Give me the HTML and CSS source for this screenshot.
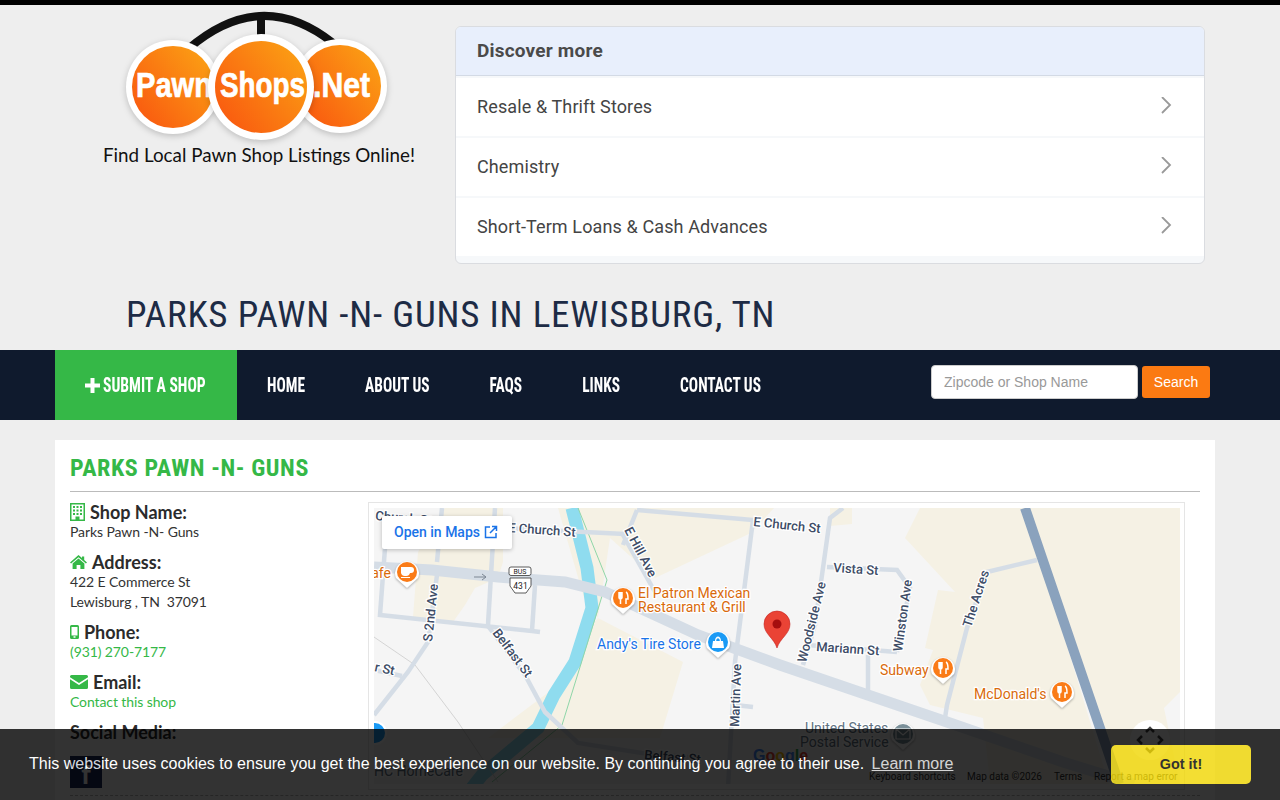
FILE: index.html
```html
<!DOCTYPE html>
<html lang="en">
<head>
    <meta charset="UTF-8">
    <meta name="viewport" content="width=device-width, initial-scale=1.0">
    <title>Parks Pawn -N- Guns in Lewisburg, TN</title>
    <link rel="stylesheet" href="styles.css">
</head>
<body>
    <header class="top">
        <a href="#" class="logo">
            <svg width="320" height="165" viewBox="0 0 320 165">
                <defs>
                    <linearGradient id="orange" x1="0" y1="1" x2="1" y2="0.2">
                        <stop offset="0" stop-color="#f9520f"/>
                        <stop offset="1" stop-color="#fb9f14"/>
                    </linearGradient>
                </defs>
                <path class="logo-arc" d="M88 44 Q161 -19 233 38"/>
                <rect x="157" y="12" width="8" height="18" fill="#111"/>
                <g class="logo-ball">
                    <circle cx="73" cy="82" r="47" fill="#fff"/>
                    <circle cx="73" cy="82" r="41" fill="url(#orange)"/>
                </g>
                <text x="36" y="92" class="logo-word" textLength="76" lengthAdjust="spacingAndGlyphs">Pawn</text>
                <g class="logo-ball">
                    <circle cx="240" cy="81" r="47" fill="#fff"/>
                    <circle cx="240" cy="81" r="41" fill="url(#orange)"/>
                </g>
                <text x="213" y="92" class="logo-word" textLength="57" lengthAdjust="spacingAndGlyphs">.Net</text>
                <g class="logo-ball">
                    <circle cx="161" cy="82" r="53" fill="#fff"/>
                    <circle cx="161" cy="82" r="46" fill="url(#orange)"/>
                </g>
                <text x="120" y="92" class="logo-word" textLength="85" lengthAdjust="spacingAndGlyphs">Shops</text>
                <text x="3" y="157" class="logo-tag" textLength="312" lengthAdjust="spacingAndGlyphs">Find Local Pawn Shop Listings Online!</text>
            </svg>
        </a>
        <div class="discover">
            <div class="discover-head">Discover more</div>
            <a href="#" class="discover-row">
                <span>Resale &amp; Thrift Stores</span>
                <svg width="12" height="18" viewBox="0 0 12 18"><path class="chev" d="M2 0 L10 8 L2 16"/></svg>
            </a>
            <a href="#" class="discover-row">
                <span>Chemistry</span>
                <svg width="12" height="18" viewBox="0 0 12 18"><path class="chev" d="M2 0 L10 8 L2 16"/></svg>
            </a>
            <a href="#" class="discover-row">
                <span>Short-Term Loans &amp; Cash Advances</span>
                <svg width="12" height="18" viewBox="0 0 12 18"><path class="chev" d="M2 0 L10 8 L2 16"/></svg>
            </a>
        </div>
    </header>

    <h1 class="page-title">PARKS PAWN -N- GUNS IN LEWISBURG, TN</h1>

    <nav class="mainnav">
        <a href="#" class="submit">
            <svg width="15" height="15" viewBox="0 0 15 15"><path fill="#fff" d="M5.5 0h4v5.5H15v4H9.5V15h-4V9.5H0v-4h5.5z"/></svg>
            <span>SUBMIT A SHOP</span>
        </a>
        <div class="navlinks">
            <a href="#">HOME</a>
            <a href="#">ABOUT US</a>
            <a href="#">FAQS</a>
            <a href="#">LINKS</a>
            <a href="#">CONTACT US</a>
        </div>
        <form class="search">
            <input type="text" placeholder="Zipcode or Shop Name">
            <button type="button">Search</button>
        </form>
    </nav>

    <main class="content">
        <h2 class="shop-title">PARKS PAWN -N- GUNS</h2>
        <div class="shop-row">
            <div class="details">
                <div class="info">
                    <h3>
                        <svg width="15" height="18" viewBox="0 0 15 18"><path class="ico" d="M0 0h15v18H0z M1.5 1.5v15h4v-3h4v3h4v-15z M3 3h2v2H3z M6.5 3h2v2h-2z M10 3h2v2h-2z M3 6.5h2v2H3z M6.5 6.5h2v2h-2z M10 6.5h2v2h-2z M3 10h2v2H3z M6.5 10h2v2h-2z M10 10h2v2h-2z" fill-rule="evenodd"/></svg>
                        Shop Name:
                    </h3>
                    <p>Parks Pawn -N- Guns</p>
                </div>
                <div class="info">
                    <h3>
                        <svg width="17" height="14" viewBox="0 0 17 14"><path class="ico" d="M8.5 0 L12 3V1.5h2.2v3.4L17 7.4 15.9 8.6 8.5 2.3 1.1 8.6 0 7.4z M8.5 3.6 14.4 8.6V14h-4V10h-3.800v4h-4V8.600z"/></svg>
                        Address:
                    </h3>
                    <p>422 E Commerce St</p>
                    <p>Lewisburg , TN&nbsp; 37091</p>
                </div>
                <div class="info">
                    <h3>
                        <svg width="9" height="14" viewBox="0 0 9 14"><path class="ico" fill-rule="evenodd" d="M1.500 0h6A1.500 1.500 0 0 1 9 1.500v11A1.500 1.500 0 0 1 7.500 14h-6A1.500 1.500 0 0 1 0 12.500v-11A1.500 1.500 0 0 1 1.500 0z M1.500 2v8.500h6V2z M3.500 11.300v1.400h2v-1.400z"/></svg>
                        Phone:
                    </h3>
                    <p><a href="#">(931) 270-7177</a></p>
                </div>
                <div class="info">
                    <h3>
                        <svg width="18" height="14" viewBox="0 0 18 14"><path class="ico" d="M1.500 0h15A1.500 1.500 0 0 1 18 1.500v.8L9 8 0 2.300v-.8A1.500 1.500 0 0 1 1.500 0z M0 4.300 9 10l9-5.700v8.200a1.500 1.500 0 0 1-1.500 1.500h-15A1.500 1.500 0 0 1 0 12.500z"/></svg>
                        Email:
                    </h3>
                    <p><a href="#">Contact this shop</a></p>
                </div>
                <div class="info">
                    <h3>Social Media:</h3>
                    <a href="#" class="fb">f</a>
                </div>
            </div>
            <div class="map-frame">
                <svg class="map" width="806" height="276" viewBox="0 0 806 276">
                    <rect width="806" height="276" fill="#f5f5f5"/>
                    <!-- land use -->
                    <g fill="#f5f1e4">
                        <path d="M71 0H129V54L124 70 101 80 91 97 79 114 39 109 44 44z"/>
                        <path d="M184 0H400L377 25 281 70 275 65 236 30 224 110 210 90z"/>
                        <path d="M224 110L309 154 286 230H114L184 177 204 130z"/>
                        <path d="M456 0H478V16L456 18z"/>
                        <path d="M546 0H651L735 276H616L609 210 556 197 546 177 559 142 551 140 564 82 581 84 531 30z"/>
                        <path d="M651 0H806V184L790 200 806 276H745z"/>
                    </g>
                    <!-- water -->
                    <path class="river" d="M198 0 L213 60 L218 100 L201 154 L180 187 L164 220 L108 267 L90 290"/>
                    <path class="stream" d="M204 0L233 72 188 217 118 274"/>
                    <path class="rail" d="M0 129L41 157 84 214 124 274"/>
                    <!-- streets -->
                    <g class="road">
                        <path d="M11 40L6 107 158 123 166 124"/>
                        <path d="M68 0L63 54"/>
                        <path d="M121 0L114 117"/>
                        <path d="M161 77L158 123"/>
                        <path d="M63 67L54 134 34 164 0 207"/>
                        <path d="M114 118L151 167 171 204 204 235 268 245 324 250"/>
                        <path d="M130 20L251 26"/>
                        <path d="M263 2L379 12"/>
                        <path d="M263 2L249 37"/>
                        <path d="M249 27L281 84"/>
                        <path d="M379 12L361 154 354 280"/>
                        <path d="M469 0L456 10 441 117 429 157"/>
                        <path d="M453 59L523 62 536 80 523 144"/>
                        <path d="M433 137L523 144"/>
                        <path d="M494 147V184"/>
                        <path d="M663 52L613 64 593 120 573 197 571 210"/>
                        <path d="M361 197L379 199"/>
                        <path d="M0 162L28 168"/>
                    </g>
                    <path class="road-main" d="M0 59L58 62 124 69 191 74 231 84 324 127 406 157 573 214 689 254 760 276"/>
                    <path class="road-high" d="M651 0L726 220 745 276"/>
                    <path class="oneway" d="M100 69H112M108 66L112 69 108 72"/>

                    <!-- street names -->
                    <text class="street" transform="translate(1 12) rotate(5)">Church St</text>
                    <text class="street" transform="translate(134 24) rotate(4)">E Church St</text>
                    <text class="street" transform="translate(379 18) rotate(6)">E Church St</text>
                    <text class="street" transform="translate(250 22) rotate(62)">E Hill Ave</text>
                    <text class="street" transform="translate(58 134) rotate(-84)">S 2nd Ave</text>
                    <text class="street" transform="translate(118 125) rotate(53)">Belfast St</text>
                    <text class="street" transform="translate(365 219) rotate(-88)">Martin Ave</text>
                    <text class="street" transform="translate(432 155) rotate(-76)">Woodside Ave</text>
                    <text class="street" transform="translate(459 64) rotate(4)">Vista St</text>
                    <text class="street" transform="translate(442 143) rotate(4)">Mariann St</text>
                    <text class="street" transform="translate(528 144) rotate(-82)">Winston Ave</text>
                    <text class="street" transform="translate(597 120) rotate(-72)">The Acres</text>
                    <text class="street" transform="translate(270 251) rotate(5)">Belfast St</text>
                    <text class="street" transform="translate(0 163) rotate(12)">r St</text>

                    <!-- route shield -->
                    <rect class="shield" x="135" y="59" width="22" height="8.500" rx="2"/>
                    <text class="shield-text" x="146" y="66" font-size="7">BUS</text>
                    <path class="shield" d="M136 70H157V78L152 85H141L136 78z"/>
                    <text class="shield-text" x="146.500" y="81" font-size="8.500">431</text>

                    <!-- places -->
                    <text class="poi poi-food" x="17" y="70" text-anchor="end">afe</text>
                    <text class="poi poi-food" x="264" y="90">El Patron Mexican</text>
                    <text class="poi poi-food" x="264" y="104">Restaurant &amp; Grill</text>
                    <text class="poi poi-shop" x="223" y="141">Andy's Tire Store</text>
                    <text class="poi poi-food" x="506" y="167">Subway</text>
                    <text class="poi poi-food" x="600" y="191">McDonald's</text>
                    <text class="poi poi-post" x="431" y="225">United States</text>
                    <text class="poi poi-post" x="426" y="239">Postal Service</text>
                    <text class="poi poi-post" x="0" y="268">HC HomeCare</text>

                    <!-- markers -->
                    <path class="pin-base" d="M22 70 A12 12 0 1 1 44 70 L33 80z"/>
                    <circle cx="33" cy="64" r="10" fill="#fa7b17"/>
                    <path fill="#fff" d="M27 59h10a3 3 0 0 1 0 6h-1a4 4 0 0 1-4 3h-1a4 4 0 0 1-4-3z M27 69h9v1h-9z"/>

                    <path class="pin-base" d="M238 96 A12 12 0 1 1 260 96 L249 106z"/>
                    <circle cx="249" cy="90" r="10" fill="#fa7b17"/>
                    <path class="fork" d="M245 84v5.500a1.500 1.500 0 0 0 3 0V84 M246.500 84v12 M252 84c2 1 2 5 2 7h-2v5"/>

                    <path class="pin-base" d="M333 140 A12 12 0 1 1 355 140 L344 150z"/>
                    <circle cx="344" cy="134" r="10" fill="#1a9af5"/>
                    <path fill="#fff" fill-rule="evenodd" d="M339 133h10l1 7h-12z M341 133c0-6 6-6 6 0h-1.200c0-3.800-3.600-3.800-3.600 0z"/>

                    <path class="pin-base" d="M558 166 A12 12 0 1 1 580 166 L569 176z"/>
                    <circle cx="569" cy="160" r="10" fill="#fa7b17"/>
                    <path class="fork" d="M565 154v5.500a1.500 1.500 0 0 0 3 0V154 M566.500 154v12 M572 154c2 1 2 5 2 7h-2v5"/>

                    <path class="pin-base" d="M677 190 A12 12 0 1 1 699 190 L688 200z"/>
                    <circle cx="688" cy="184" r="10" fill="#fa7b17"/>
                    <path class="fork" d="M684 178v5.500a1.500 1.500 0 0 0 3 0V178 M685.500 178v12 M691 178c2 1 2 5 2 7h-2v5"/>

                    <path class="pin-base" d="M518 232 A12 12 0 1 1 540 232 L529 242z"/>
                    <circle cx="529" cy="226" r="10" fill="#7b9099"/>
                    <path d="M522 221h14v10h-14z M522 221l7 6 7-6" fill="none" stroke="#fff" stroke-width="1.200"/>

                    <circle cx="1" cy="225" r="11" fill="#1a9af5" stroke="#fff" stroke-width="2"/>

                    <path fill="#ea4335" stroke="#c5221f" stroke-width="0.600" d="M403 140 C400 130 390 126 390 116 A13 13 0 0 1 416 116 C416 126 406 130 403 140z"/>
                    <circle cx="403" cy="116" r="4.500" fill="#a50e0e"/>

                    <!-- map furniture -->
                    <text class="google" x="379" y="253"><tspan fill="#4285f4">G</tspan><tspan fill="#ea4335">o</tspan><tspan fill="#fbbc05">o</tspan><tspan fill="#4285f4">g</tspan><tspan fill="#34a853">l</tspan><tspan fill="#ea4335">e</tspan></text>
                    <circle cx="776" cy="232" r="20" fill="#fff"/>
                    <path class="ctrl" d="M772 224L776 220 780 224 M772 240L776 244 780 240 M768 228L764 232 768 236 M784 228L788 232 784 236"/>
                    <text class="attrib" x="495" y="272">Keyboard shortcuts</text>
                    <text class="attrib" x="593" y="272">Map data ©2026</text>
                    <text class="attrib" x="680" y="272">Terms</text>
                    <text class="attrib" x="720" y="272">Report a map error</text>
                </svg>
                <a href="#" class="open-maps">
                    Open in Maps
                    <svg width="14" height="14" viewBox="0 0 14 14"><path fill="none" stroke="#1a73e8" stroke-width="1.500" d="M6 2H1.500v10.500H12V8 M8 1.500h4.500V6 M12.500 1.500L6 8"/></svg>
                </a>
            </div>
        </div>
        <div class="dashed"></div>
    </main>

    <div class="cookie">
        <span class="cookie-msg">This website uses cookies to ensure you get the best experience on our website. By continuing you agree to their use. <a href="#">Learn more</a></span>
        <a href="#" class="cookie-btn">Got it!</a>
    </div>
</body>
</html>
```

FILE: styles.css
```css
body {
    margin: 0;
    background: #eee;
    border-top: 5px solid #000;
    font-family: 'Lato', sans-serif;
    color: #1f2937;
}

a {
    text-decoration: none;
}

/* Header */
.top {
    display: flex;
    align-items: flex-start;
    padding-left: 100px;
}

.logo {
    display: block;
    width: 355px;
    height: 165px;
}

.logo svg {
    display: block;
}

.logo-arc {
    fill: none;
    stroke: #111;
    stroke-width: 8;
}

.logo-ball {
    filter: drop-shadow(0 2px 3px rgba(0, 0, 0, 0.2));
}

.logo-word {
    font-family: 'Liberation Sans', sans-serif;
    font-weight: bold;
    font-size: 35px;
    fill: #fff;
    stroke: #fff;
    stroke-width: 0.7;
}

.logo-tag {
    font-family: 'Lato', sans-serif;
    font-size: 19px;
    fill: #111;
}

.discover {
    width: 750px;
    height: 238px;
    margin-top: 21px;
    box-sizing: border-box;
    background: #f6f8fa;
    border: 1px solid #dadce0;
    border-radius: 6px;
    overflow: hidden;
    font-family: 'Roboto', sans-serif;
}

.discover-head {
    height: 48px;
    line-height: 48px;
    padding-left: 21px;
    background: #e8effc;
    border-bottom: 1px solid #d3dae5;
    font-size: 19px;
    font-weight: 700;
    letter-spacing: 0.2px;
    color: #4a4a4a;
}

.discover-row {
    display: flex;
    justify-content: space-between;
    align-items: center;
    height: 58px;
    margin-top: 2px;
    padding: 0 32px 2px 21px;
    box-sizing: border-box;
    background: #fff;
    font-size: 18px;
    letter-spacing: 0.12px;
    color: #444;
}

.chev {
    fill: none;
    stroke: #999;
    stroke-width: 1.8;
}

.page-title {
    margin: 0;
    padding: 27px 0 0 126px;
    height: 59px;
    font-family: 'Roboto', sans-serif;
    font-stretch: 75%;
    font-size: 37px;
    letter-spacing: 0.8px;
    line-height: 48px;
    font-weight: 400;
    color: #1d2b45;
    white-space: nowrap;
}

/* Navigation */
.mainnav {
    display: flex;
    align-items: center;
    height: 70px;
    padding-left: 55px;
    background: #0f1a2d;
}

.mainnav a {
    font-family: 'Roboto', sans-serif;
    font-stretch: 75%;
    font-weight: bold;
    font-size: 20px;
    color: #fff;
    white-space: nowrap;
}

.submit {
    display: flex;
    align-items: center;
    gap: 3px;
    flex: none;
    width: 182px;
    height: 70px;
    padding-left: 30px;
    box-sizing: border-box;
    background: #35b847;
}

/* no condensed face installed, so the labels get squeezed */
.submit span {
    display: inline-block;
    transform: scaleX(0.78);
    transform-origin: left center;
}

.navlinks {
    display: flex;
    flex: 1;
    min-width: 0;
    transform: scaleX(0.77);
    transform-origin: left center;
}

.navlinks a {
    padding: 0 39px;
}

.search {
    display: flex;
    align-items: center;
    gap: 4px;
    flex: none;
    margin-right: 70px;
    margin-top: -6px;
}

.search input {
    width: 207px;
    height: 34px;
    box-sizing: border-box;
    padding: 0 12px;
    border: 1px solid #ccc;
    border-radius: 4px;
    font-family: 'Liberation Sans', sans-serif;
    font-size: 14px;
}

.search input::placeholder {
    color: #999;
}

.search button {
    width: 68px;
    height: 32px;
    border: 0;
    border-radius: 3px;
    background: #fb7a12;
    color: #fff;
    font-family: 'Liberation Sans', sans-serif;
    font-size: 14px;
}

/* Shop details */
.content {
    width: 1160px;
    margin: 20px 0 0 55px;
    padding: 15px 15px 0;
    box-sizing: border-box;
    background: #fff;
}

.shop-title {
    margin: 0 0 10px;
    padding-bottom: 8px;
    height: 28px;
    line-height: 26px;
    border-bottom: 1px solid #bbb;
    font-family: 'Roboto', sans-serif;
    font-stretch: 75%;
    font-size: 24px;
    letter-spacing: 0.6px;
    font-weight: 700;
    color: #35b847;
}

.shop-row {
    display: flex;
}

.details {
    width: 298px;
    flex: none;
}

.info {
    margin-bottom: 10px;
}

.info:last-child {
    margin-bottom: 0;
}

.info h3 {
    display: flex;
    align-items: center;
    gap: 5px;
    margin: 0;
    height: 20px;
    font-size: 18px;
    line-height: 18px;
    font-weight: 700;
    color: #2b2b2b;
}

.info p {
    margin: 0;
    font-size: 14px;
    line-height: 20px;
    letter-spacing: -0.1px;
    color: #333;
}

.info a {
    color: #35b847;
}

.ico {
    fill: #35b847;
}

.info .fb {
    display: block;
    width: 32px;
    height: 32px;
    margin-top: 14px;
    background: #1a2a5a;
    color: #fff;
    font-size: 26px;
    font-weight: 900;
    line-height: 36px;
    text-align: center;
}

.map-frame {
    position: relative;
    width: 817px;
    height: 288px;
    box-sizing: border-box;
    padding: 5px;
    border: 1px solid #e5e5e5;
}

.map {
    display: block;
    font-family: 'Roboto', sans-serif;
}

.river {
    fill: none;
    stroke: #8fdcef;
    stroke-width: 13;
}

.stream {
    fill: none;
    stroke: #8fd6a8;
    stroke-width: 1;
}

.rail {
    fill: none;
    stroke: #d4d4d4;
    stroke-width: 1;
}

.road {
    fill: none;
    stroke: #d5dde6;
    stroke-width: 4.500;
}

.road-main {
    fill: none;
    stroke: #d5dde6;
    stroke-width: 11;
}

.road-high {
    fill: none;
    stroke: #8aa2bd;
    stroke-width: 10;
}

.oneway {
    fill: none;
    stroke: #7c8794;
    stroke-width: 1;
}

.street {
    font-size: 13px;
    font-weight: 500;
    fill: #3d4c66;
    stroke: #fff;
    stroke-width: 2.500;
    paint-order: stroke;
}

.shield {
    fill: #fff;
    stroke: #333;
    stroke-width: 0.800;
}

.shield-text {
    fill: #222;
    text-anchor: middle;
}

.poi {
    font-size: 14px;
    stroke: #fff;
    stroke-width: 2.500;
    paint-order: stroke;
}

.poi-food {
    fill: #d96a0b;
}

.poi-shop {
    fill: #1a73e8;
}

.poi-post {
    fill: #5f7282;
}

.pin-base {
    fill: #fff;
    filter: drop-shadow(0 1px 1px rgba(0, 0, 0, 0.3));
}

.fork {
    fill: none;
    stroke: #fff;
    stroke-width: 1.500;
}

.google {
    font-size: 16px;
    font-weight: bold;
    font-family: 'Liberation Sans', sans-serif;
}

.ctrl {
    fill: none;
    stroke: #444;
    stroke-width: 2.500;
}

.attrib {
    font-size: 10px;
    fill: #333;
}

.open-maps {
    position: absolute;
    top: 13px;
    left: 13px;
    display: flex;
    align-items: center;
    gap: 4px;
    width: 130px;
    height: 33px;
    box-sizing: border-box;
    padding: 0 0 2px 12px;
    background: #fff;
    border-radius: 2px;
    box-shadow: 0 1px 4px rgba(0, 0, 0, 0.25);
    font-family: 'Roboto', sans-serif;
    font-size: 14px;
    font-weight: 500;
    color: #1a73e8;
}

.dashed {
    margin-top: 5px;
    height: 40px;
    border-top: 1px dashed #bbb;
}

/* Cookie bar */
.cookie {
    position: fixed;
    left: 0;
    right: 0;
    bottom: 0;
    display: flex;
    align-items: center;
    justify-content: space-between;
    height: 71px;
    padding: 0 29px;
    box-sizing: border-box;
    background: #000;
    opacity: 0.8;
    font-family: 'Liberation Sans', sans-serif;
    font-size: 16px;
    color: #fff;
}

.cookie-msg {
    margin-top: -2px;
}

.cookie-msg a {
    margin-left: 3px;
    color: #fff;
    opacity: 0.8;
    text-decoration: underline;
}

.cookie-btn {
    width: 140px;
    height: 39px;
    background: #f1d600;
    border-radius: 5px;
    color: #000;
    font-size: 14.400px;
    font-weight: bold;
    line-height: 39px;
    text-align: center;
}
```
